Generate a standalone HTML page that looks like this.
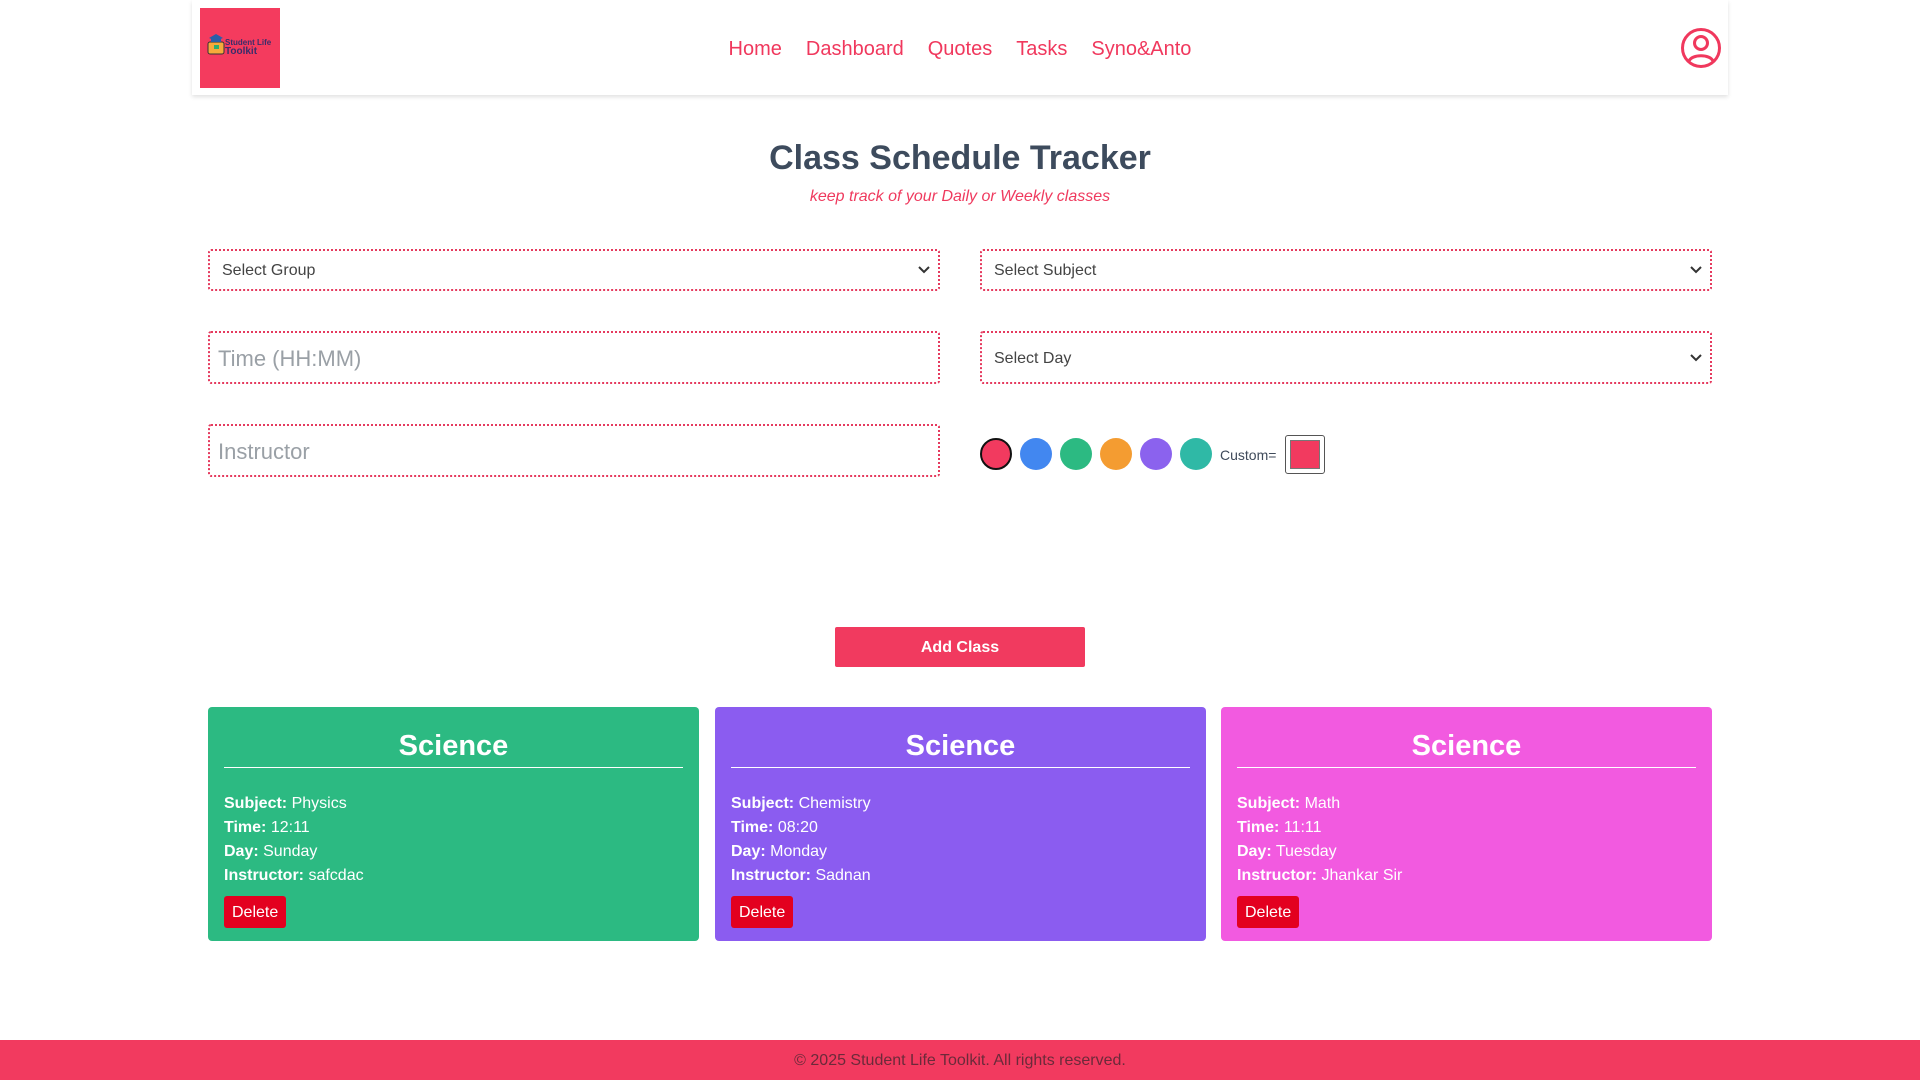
<!DOCTYPE html>
<html><head><meta charset="utf-8"><style>
*{box-sizing:border-box;margin:0;padding:0}
body{width:1920px;height:1080px;background:#fff;font-family:"Liberation Sans",sans-serif;position:relative;overflow:hidden;color:#3f4a5a}
.hdr{position:absolute;left:192px;top:0;width:1536px;height:95px;background:#fff;box-shadow:0 2px 4px rgba(0,0,0,.12)}
.logo{position:absolute;left:8px;top:8px;width:80px;height:80px;background:#f43b5e}
.nav{position:absolute;top:38px;left:0;width:100%;text-align:center;font-size:20px;color:#f0385d}
.nav span{margin:0 12px}
.user{position:absolute;left:1488px;top:27px}
h1{position:absolute;top:139px;width:100%;text-align:center;font-size:34px;font-weight:bold;color:#3d4b5d}
.sub{position:absolute;top:188px;width:100%;text-align:center;font-size:16px;font-style:italic;color:#ef3a5e}
.f{position:absolute;border:2px dotted #e53a5e;border-radius:3px;background:#fff;color:#444;font-size:16px;padding-left:12px;padding-top:2px;display:flex;align-items:center}
.f.ph{color:#9aa0a6;font-size:22px;padding-left:8px}
.f .ar{position:absolute;right:8px;top:50%;transform:translateY(-50%)}
.dot{position:absolute;top:438px;width:32px;height:32px;border-radius:50%}
.btn{position:absolute;left:835px;top:627px;width:250px;height:40px;background:#f13a5f;color:#fff;font-weight:bold;font-size:16px;display:flex;align-items:center;justify-content:center;border-radius:2px;padding-top:2px}
.card{position:absolute;top:707px;width:491px;height:234px;border-radius:4px;color:#fff;padding:0 16px}
.card h2{text-align:center;font-size:29px;padding-top:23px;height:61px;border-bottom:1.5px solid #fff}
.card p{font-size:16px;line-height:24px}
.card .l{margin-top:24px}
.del{display:inline-block;margin-top:8px;background:#e3001f;color:#fff;font-size:16px;padding:2px 8px 0;height:32px;line-height:30px;border-radius:3px}
.foot{position:absolute;left:0;top:1040px;width:1920px;height:40px;background:#f23a5f;color:#6b2a3a;font-size:16px;text-align:center;line-height:42px}
</style></head><body>
<div class="hdr">
 <div class="logo"><svg width="80" height="80" viewBox="0 0 80 80"><rect x="8" y="34" width="16" height="12" rx="2" fill="#f6a93b" stroke="#333" stroke-width="1"/><rect x="14" y="37" width="5" height="4" fill="#2cae6e"/><path d="M9 30 L16 26 L23 30 L16 33Z" fill="#2b5ea8"/><rect x="11" y="30" width="10" height="4" fill="#2b5ea8"/><text x="25" y="37" font-size="8" font-weight="bold" fill="#3a2d6a" font-family="Liberation Sans">Student Life</text><text x="25" y="46" font-size="10" font-weight="bold" fill="#3a2d6a" font-family="Liberation Sans">Toolkit</text></svg></div>
 <div class="nav"><span>Home</span><span>Dashboard</span><span>Quotes</span><span>Tasks</span><span>Syno&amp;Anto</span></div>
 <svg class="user" width="42" height="42" viewBox="0 0 42 42" fill="none" stroke="#f0385d" stroke-width="3"><circle cx="21" cy="21" r="18.5"/><circle cx="21" cy="16" r="6.5"/><path d="M9 34 C12 27 30 27 33 34"/></svg>
</div>
<h1>Class Schedule Tracker</h1>
<div class="sub">keep track of your Daily or Weekly classes</div>
<div class="f" style="left:208px;top:249px;width:732px;height:42px">Select Group<svg class="ar" width="12" height="8"><path d="M1 1 L6 6 L11 1" stroke="#333" stroke-width="2" fill="none"/></svg></div>
<div class="f" style="left:980px;top:249px;width:732px;height:42px">Select Subject<svg class="ar" width="12" height="8"><path d="M1 1 L6 6 L11 1" stroke="#333" stroke-width="2" fill="none"/></svg></div>
<div class="f ph" style="left:208px;top:331px;width:732px;height:53px">Time (HH:MM)</div>
<div class="f" style="left:980px;top:331px;width:732px;height:53px">Select Day<svg class="ar" width="12" height="8"><path d="M1 1 L6 6 L11 1" stroke="#333" stroke-width="2" fill="none"/></svg></div>
<div class="f ph" style="left:208px;top:424px;width:732px;height:53px">Instructor</div>
<div class="dot" style="left:980px;background:#f23a5f;border:2px solid #111"></div>
<div class="dot" style="left:1020px;background:#4287f0"></div>
<div class="dot" style="left:1060px;background:#2cba82"></div>
<div class="dot" style="left:1100px;background:#f49c31"></div>
<div class="dot" style="left:1140px;background:#8b62ee"></div>
<div class="dot" style="left:1180px;background:#2fb9a6"></div>
<div style="position:absolute;left:1220px;top:447px;font-size:14px;color:#3f4a5a">Custom=</div>
<div style="position:absolute;left:1285px;top:435px;width:40px;height:39px;border:1px solid #555;border-radius:3px;padding:4px"><div style="width:100%;height:100%;background:#f23a5f;border:1px solid #777"></div></div>
<div class="btn">Add Class</div>
<div class="card" style="left:208px;background:#2cba82"><h2>Science</h2><p class="l"><b>Subject:</b> Physics</p><p><b>Time:</b> 12:11</p><p><b>Day:</b> Sunday</p><p><b>Instructor:</b> safcdac</p><span class="del">Delete</span></div>
<div class="card" style="left:715px;background:#8b5cf0"><h2>Science</h2><p class="l"><b>Subject:</b> Chemistry</p><p><b>Time:</b> 08:20</p><p><b>Day:</b> Monday</p><p><b>Instructor:</b> Sadnan</p><span class="del">Delete</span></div>
<div class="card" style="left:1221px;background:#f25ae0"><h2>Science</h2><p class="l"><b>Subject:</b> Math</p><p><b>Time:</b> 11:11</p><p><b>Day:</b> Tuesday</p><p><b>Instructor:</b> Jhankar Sir</p><span class="del">Delete</span></div>
<div class="foot">© 2025 Student Life Toolkit. All rights reserved.</div>
</body></html>
